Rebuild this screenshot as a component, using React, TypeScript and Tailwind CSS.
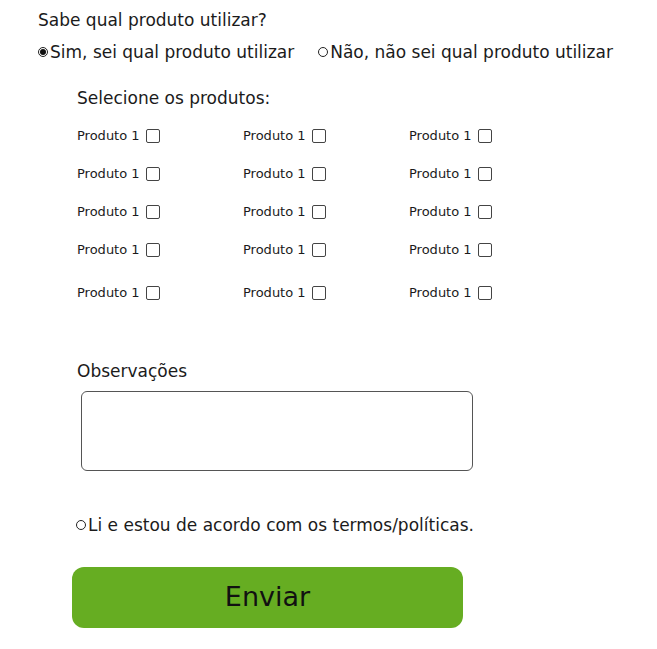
import React from "react";

const rows = [0, 1, 2, 3, 4];
const cols = [0, 1, 2];

function Item() {
  return (
    <div className="flex items-center text-[13px] text-[#1b1b1b]">
      <span>Produto 1</span>
      <span className="ml-[6px] inline-block h-[14px] w-[14px] border border-[#444] bg-white rounded-[2px]" />
    </div>
  );
}

function Radio({ checked }: { checked?: boolean }) {
  return (
    <span className="mr-[2px] inline-flex h-[10px] w-[10px] items-center justify-center rounded-full border border-[#222]">
      {checked && <span className="h-[6px] w-[6px] rounded-full bg-[#111]" />}
    </span>
  );
}

export default function App() {
  return (
    <div className="w-[657px] h-[649px] bg-white text-[#1b1b1b]" style={{ fontFamily: '"DejaVu Sans", sans-serif' }}>
      <div className="pl-[38px] pt-[10px] text-[17px] leading-[20px]">Sabe qual produto utilizar?</div>
      <div className="flex items-center pl-[38px] pt-[12px] text-[17px] leading-[20px]">
        <Radio checked />
        <span>Sim, sei qual produto utilizar</span>
        <span className="ml-[24px] flex items-center">
          <Radio />
          <span>Não, não sei qual produto utilizar</span>
        </span>
      </div>
      <div className="pl-[77px] pt-[26px] text-[17px] leading-[20px]">Selecione os produtos:</div>
      <div className="pl-[77px] pt-[18px] flex flex-col">
        {rows.map((r) => (
          <div key={r} className={`grid grid-cols-[166px_166px_166px] h-[20px] ${r === 0 ? "" : r === 4 ? "mt-[23px]" : "mt-[18px]"}`}>
            {cols.map((c) => (
              <Item key={c} />
            ))}
          </div>
        ))}
      </div>
      <div className="pl-[77px] pt-[58px] text-[17px] leading-[20px]">Observações</div>
      <div className="pl-[81px] pt-[10px]">
        <div className="w-[392px] h-[80px] border border-[#555] rounded-[6px]" />
      </div>
      <div className="flex items-center pl-[76px] pt-[44px] text-[17px] leading-[20px]">
        <Radio />
        <span>Li e estou de acordo com os termos/políticas.</span>
      </div>
      <div className="pl-[72px] pt-[32px]">
        <div className="w-[391px] h-[61px] rounded-[12px] bg-[#66ad22] flex items-center justify-center text-[27px] text-[#111]">Enviar</div>
      </div>
    </div>
  );
}
